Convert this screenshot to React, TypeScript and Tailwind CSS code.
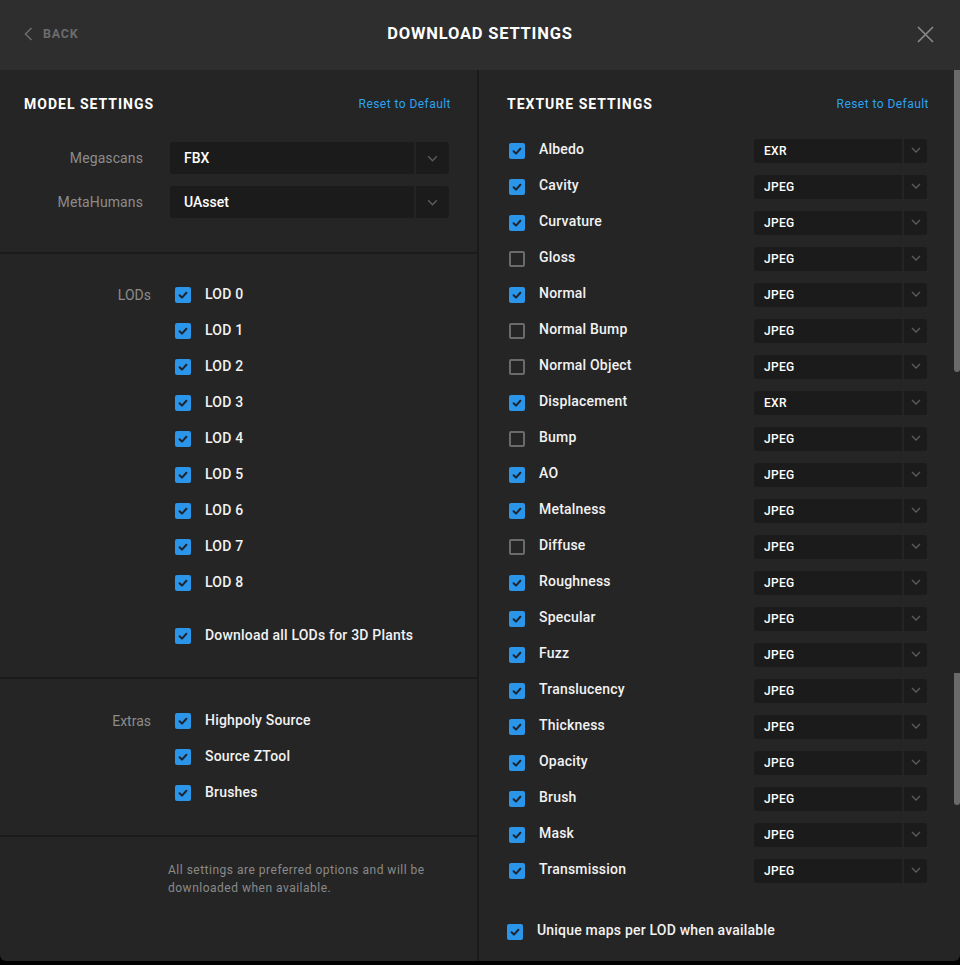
import React from "react";

const Check = ({ on }: { on: boolean }) =>
  on ? (
    <div className="w-4 h-4 rounded-[2px] bg-[#2b95ea] flex items-center justify-center shrink-0">
      <svg width="16" height="16" viewBox="0 0 16 16">
        <path d="M4.6 8.3 L7 10.6 L11.4 5.8" fill="none" stroke="#1d2430" strokeWidth="2" strokeLinecap="round" strokeLinejoin="round" />
      </svg>
    </div>
  ) : (
    <div className="w-4 h-4 rounded-[2px] border-2 border-[#6a6a6a] shrink-0" />
  );

const Chevron = ({ size = 12 }: { size?: number }) => (
  <svg width={size} height={size} viewBox="0 0 12 12">
    <path d="M2 4 L6 8 L10 4" fill="none" stroke="#5c5c5c" strokeWidth="1.3" />
  </svg>
);

const textures: [string, boolean, string][] = [
  ["Albedo", true, "EXR"],
  ["Cavity", true, "JPEG"],
  ["Curvature", true, "JPEG"],
  ["Gloss", false, "JPEG"],
  ["Normal", true, "JPEG"],
  ["Normal Bump", false, "JPEG"],
  ["Normal Object", false, "JPEG"],
  ["Displacement", true, "EXR"],
  ["Bump", false, "JPEG"],
  ["AO", true, "JPEG"],
  ["Metalness", true, "JPEG"],
  ["Diffuse", false, "JPEG"],
  ["Roughness", true, "JPEG"],
  ["Specular", true, "JPEG"],
  ["Fuzz", true, "JPEG"],
  ["Translucency", true, "JPEG"],
  ["Thickness", true, "JPEG"],
  ["Opacity", true, "JPEG"],
  ["Brush", true, "JPEG"],
  ["Mask", true, "JPEG"],
  ["Transmission", true, "JPEG"],
];

const lods = ["LOD 0", "LOD 1", "LOD 2", "LOD 3", "LOD 4", "LOD 5", "LOD 6", "LOD 7", "LOD 8"];

const font = { fontFamily: "Roboto, 'Noto Sans', sans-serif" };

export default function App() {
  return (
    <div className="w-[960px] h-[965px] bg-black overflow-hidden" style={font}>
      <div className="w-[960px] h-[961px] bg-[#252525] rounded-b-[6px] overflow-hidden flex flex-col">
        {/* Header */}
        <div className="h-[70px] bg-[#2e2e2e] flex items-center pb-[2px] shrink-0">
          <div className="w-[200px] pl-[24px] flex items-center gap-[10px] text-[#6c6c6c]">
            <svg width="9" height="14" viewBox="0 0 9 14">
              <path d="M7.5 1 L1.5 7 L7.5 13" fill="none" stroke="#6c6c6c" strokeWidth="1.6" />
            </svg>
            <span className="text-[12.5px] font-bold tracking-[0.8px]">BACK</span>
          </div>
          <div className="flex-1 text-center text-white text-[16.5px] font-bold tracking-[0.8px]">DOWNLOAD SETTINGS</div>
          <div className="w-[200px] pr-[26px] flex justify-end">
            <svg width="17" height="17" viewBox="0 0 17 17">
              <path d="M1 1 L16 16 M16 1 L1 16" fill="none" stroke="#8a8a8a" strokeWidth="1.6" />
            </svg>
          </div>
        </div>

        {/* Body */}
        <div className="flex flex-1 min-h-0">
          {/* Left */}
          <div className="w-[477px] flex flex-col shrink-0">
            <div className="pt-[24px] pb-[34px] border-b-2 border-[#1b1b1b]">
              <div className="flex items-center justify-between h-5 pl-[24px] pr-[26px]">
                <span className="text-white text-[14px] font-bold tracking-[1px]">MODEL SETTINGS</span>
                <span className="text-[#2ca2f0] text-[12px] tracking-[0.45px]">Reset to Default</span>
              </div>
              <div className="mt-[28px] flex flex-col gap-[12px]">
                {[
                  ["Megascans", "FBX"],
                  ["MetaHumans", "UAsset"],
                ].map(([l, v]) => (
                  <div key={l} className="flex items-center">
                    <div className="w-[143px] text-right text-[14px] text-[#8c8c8c] tracking-[0.1px]">{l}</div>
                    <div className="ml-[27px] w-[279px] h-[32px] flex rounded-[3px] overflow-hidden bg-[#1b1b1b]">
                      <div className="flex-1 flex items-center pl-[14px] text-[14px] font-medium text-white">{v}</div>
                      <div className="w-[2px] bg-[#242424]" />
                      <div className="w-[33px] flex items-center justify-center">
                        <Chevron size={13} />
                      </div>
                    </div>
                  </div>
                ))}
              </div>
            </div>

            <div className="pt-[23px] pb-[23px] border-b-2 border-[#1b1b1b] flex">
              <div className="w-[151px] text-right text-[14px] text-[#8c8c8c] h-[36px] leading-[36px]">LODs</div>
              <div className="ml-[24px] flex flex-col">
                {lods.map((l) => (
                  <div key={l} className="h-[36px] flex items-center">
                    <Check on />
                    <span className="ml-[14px] pb-[2px] text-[14px] font-medium tracking-[0.2px] text-[#f2f2f2]">{l}</span>
                  </div>
                ))}
                <div className="mt-[17px] h-[36px] flex items-center">
                  <Check on />
                  <span className="ml-[14px] pb-[2px] text-[14px] font-medium tracking-[0.2px] text-[#f2f2f2]">Download all LODs for 3D Plants</span>
                </div>
              </div>
            </div>

            <div className="pt-[24px] pb-[24px] border-b-2 border-[#1b1b1b] flex">
              <div className="w-[151px] text-right text-[14px] text-[#8c8c8c] h-[36px] leading-[36px]">Extras</div>
              <div className="ml-[24px] flex flex-col">
                {["Highpoly Source", "Source ZTool", "Brushes"].map((l) => (
                  <div key={l} className="h-[36px] flex items-center">
                    <Check on />
                    <span className="ml-[14px] pb-[2px] text-[14px] font-medium tracking-[0.2px] text-[#f2f2f2]">{l}</span>
                  </div>
                ))}
              </div>
            </div>

            <div className="pt-[24px] pl-[168px] pr-[30px] text-[12px] leading-[18px] tracking-[0.5px] text-[#8a8a8a]">
              All settings are preferred options and will be downloaded when available.
            </div>
          </div>

          <div className="w-[2px] bg-[#1b1b1b] shrink-0" />

          {/* Right */}
          <div className="flex-1 relative pl-[28px] pr-[33px] pt-[24px]">
            <div className="flex items-center justify-between h-5">
              <span className="text-white text-[14px] font-bold tracking-[1px]">TEXTURE SETTINGS</span>
              <span className="text-[#2ca2f0] text-[12px] tracking-[0.45px] -mr-[2px]">Reset to Default</span>
            </div>
            <div className="mt-[19px] flex flex-col">
              {textures.map(([l, on, f]) => (
                <div key={l} className="h-[36px] flex items-center">
                  <div className="ml-[2px]">
                    <Check on={on} />
                  </div>
                  <span className="ml-[14px] pb-[3px] text-[14px] font-medium tracking-[0.2px] text-[#f2f2f2]">{l}</span>
                  <div className="ml-auto w-[173px] h-[24px] flex rounded-[3px] overflow-hidden bg-[#1b1b1b]">
                    <div className="flex-1 flex items-center pl-[10px] text-[12px] font-medium text-white tracking-[0.3px]">{f}</div>
                    <div className="w-[2px] bg-[#242424]" />
                    <div className="w-[23px] flex items-center justify-center pb-[3px]">
                      <Chevron size={12} />
                    </div>
                  </div>
                </div>
              ))}
            </div>
            <div className="mt-[25px] h-[36px] flex items-center">
              <Check on />
              <span className="ml-[14px] pb-[3px] text-[14px] font-medium tracking-[0.2px] text-[#f2f2f2]">Unique maps per LOD when available</span>
            </div>

            <div className="absolute right-0 top-0 w-[6px] h-[302px] bg-[#6a6a6a] rounded-b-[3px]" />
            <div className="absolute right-0 top-[603px] w-[6px] h-[132px] bg-[#6a6a6a] rounded-b-[3px]" />
          </div>
        </div>
      </div>
    </div>
  );
}
